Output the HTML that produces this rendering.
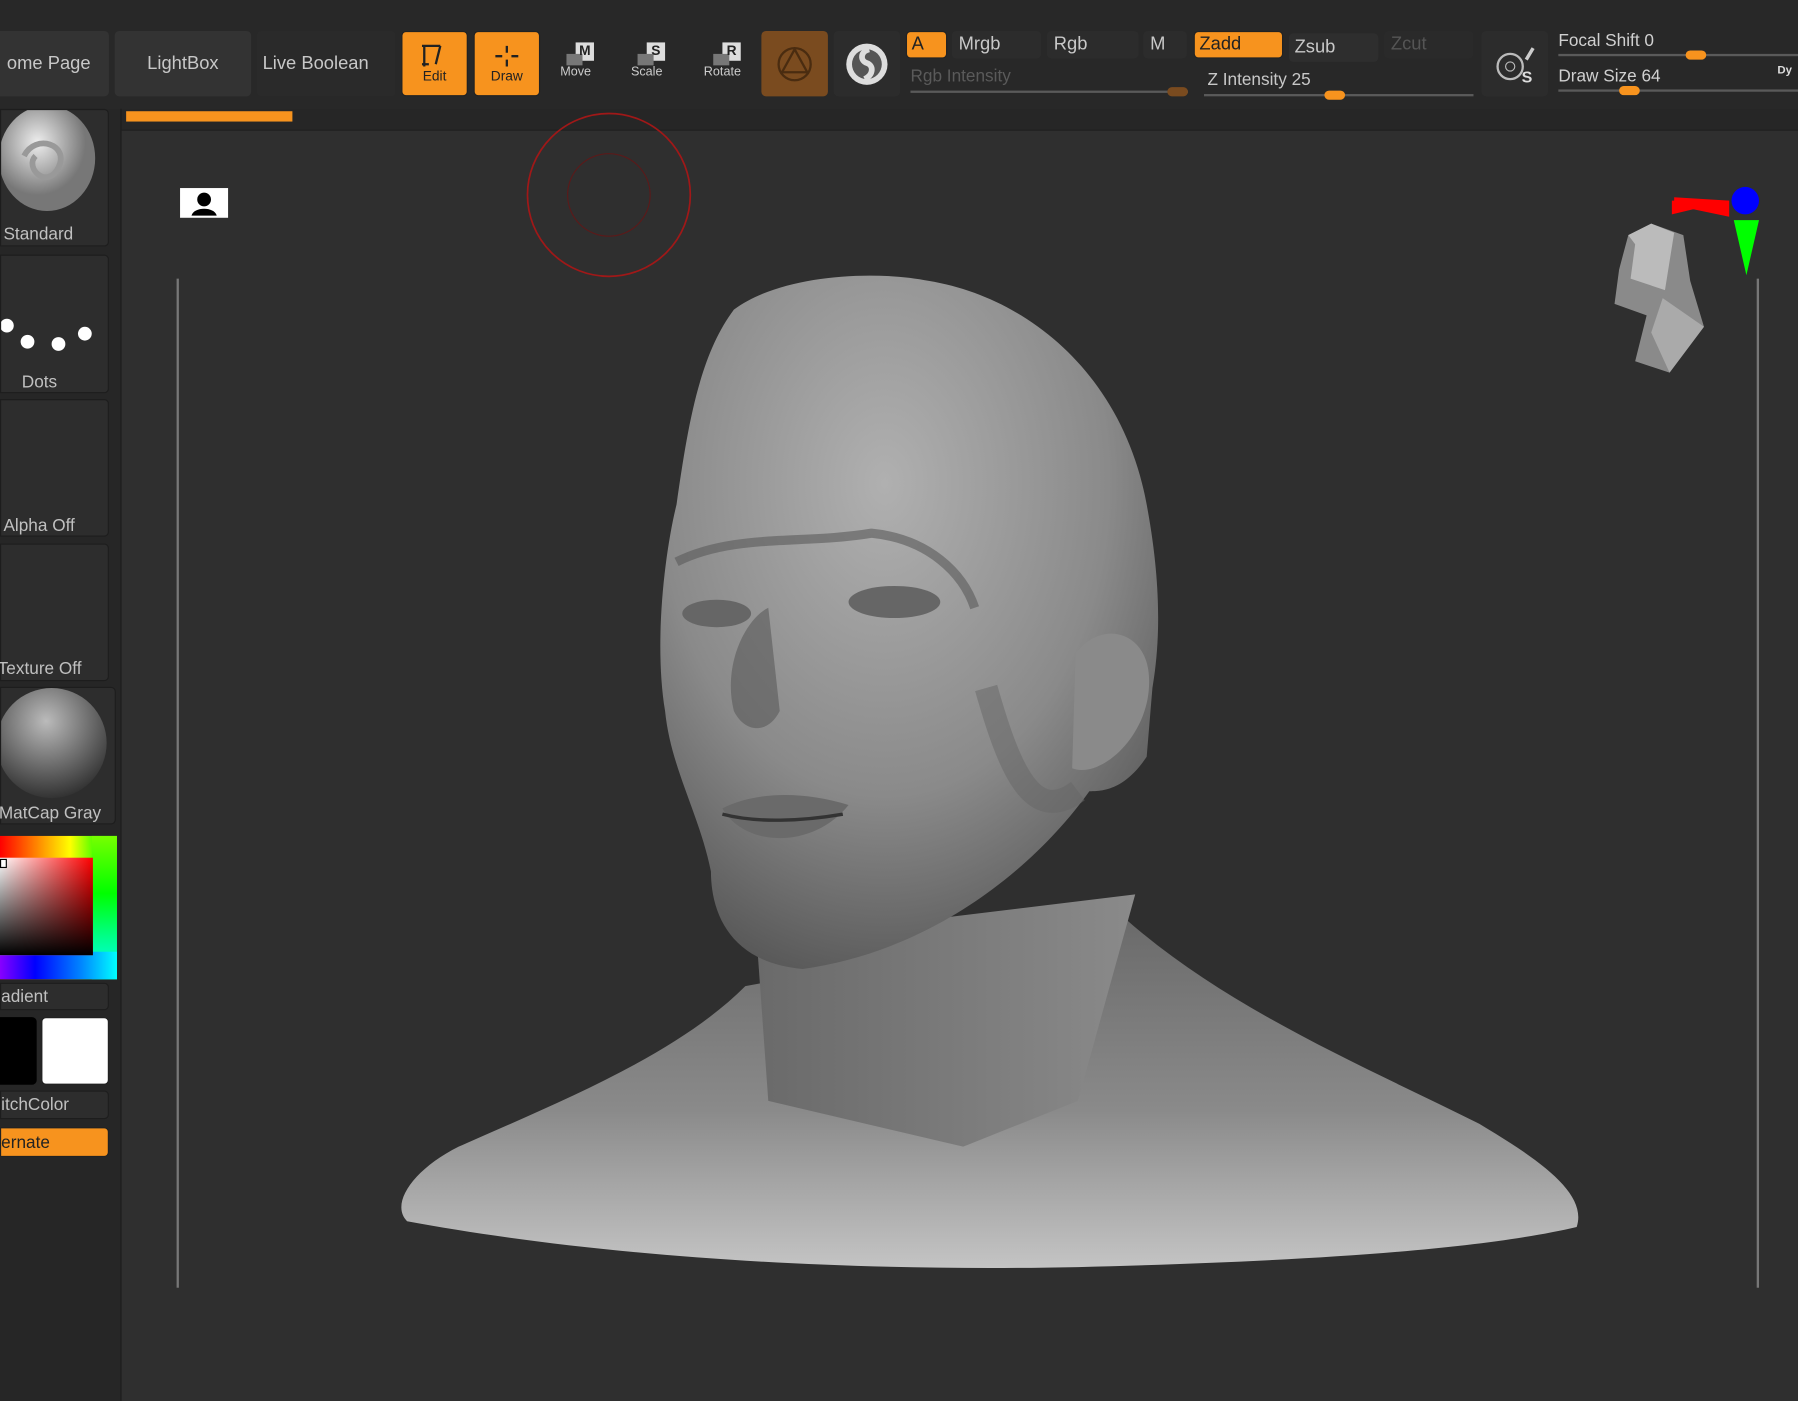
<!DOCTYPE html>
<html><head><meta charset="utf-8"><style>
*{margin:0;padding:0;box-sizing:border-box}
body{width:1798px;height:1401px;overflow:hidden;background:#262626;font-family:"Liberation Sans",sans-serif}
#w{position:absolute;left:0;top:0;width:1568px;height:1222px;transform:scale(1.14668);transform-origin:0 0;background:#262626}
.a{position:absolute}
.b{position:absolute;background:#303030;border-radius:4px;color:#c8c8c8;font-size:16px;display:flex;align-items:center;justify-content:center}
.o{background:#f7931e;color:#222;border:1px solid #222}
.s{position:absolute;height:2px;background:#5a5a5a}
.t{position:absolute;width:18px;height:8px;border-radius:4px;background:#f7931e}
.tile{position:absolute;left:0;width:95px;background:#2d2d2d;border-radius:0 4px 4px 0;border:1px solid #1d1d1d}
.lab{position:absolute;left:2px;color:#c0c0c0;font-size:15px;white-space:nowrap}
.ib{position:absolute;color:#ccc;font-size:11px;text-align:center}
</style></head><body><div id="w">
<div class="a" style="left:0;top:0;width:1568px;height:95px;background:#282828"></div>
<div class="b" style="left:-10px;top:27px;width:105px;height:57px;background:#333">ome Page</div>
<div class="b" style="left:100px;top:27px;width:119px;height:57px;background:#333">LightBox</div>
<div class="b" style="left:224px;top:27px;width:121px;height:57px;background:#2a2a2a;justify-content:flex-start;padding-left:5px">Live Boolean</div>
<div class="b o" style="left:350px;top:27px;width:58px;height:57px;font-size:12px;align-items:flex-end;padding-bottom:10px">Edit</div>
<svg class="a" style="left:364px;top:36px" width="30" height="26"><path d="M4 4h16M6 4v18M4 20h6M20 4l-4 16" stroke="#222" stroke-width="2" fill="none"/></svg>
<div class="b o" style="left:413px;top:27px;width:58px;height:57px;font-size:12px;align-items:flex-end;padding-bottom:10px">Draw</div>
<svg class="a" style="left:428px;top:38px" width="28" height="24"><path d="M14 2v6M14 14v6M4 11h6M18 11h6" stroke="#222" stroke-width="2"/></svg>
<div class="ib" style="left:480px;top:37px;width:44px"><div style="margin-left:22px;width:16px;height:16px;background:#ddd;color:#222;font-weight:bold;font-size:12px">M</div><div style="margin:-6px 0 0 14px;width:14px;height:10px;background:#777"></div>Move</div>
<div class="ib" style="left:542px;top:37px;width:44px"><div style="margin-left:22px;width:16px;height:16px;background:#ddd;color:#222;font-weight:bold;font-size:12px">S</div><div style="margin:-6px 0 0 14px;width:14px;height:10px;background:#777"></div>Scale</div>
<div class="ib" style="left:608px;top:37px;width:44px"><div style="margin-left:22px;width:16px;height:16px;background:#ddd;color:#222;font-weight:bold;font-size:12px">R</div><div style="margin:-6px 0 0 14px;width:14px;height:10px;background:#777"></div>Rotate</div>
<div class="b" style="left:664px;top:27px;width:58px;height:57px;background:#7a4b1f"><svg width="34" height="34"><circle cx="17" cy="17" r="14" stroke="#4a2c10" stroke-width="2" fill="none"/><path d="M17 4L6 24h22z" stroke="#4a2c10" stroke-width="2" fill="none"/></svg></div>
<div class="b" style="left:727px;top:27px;width:58px;height:57px;background:#2c2c2c"><svg width="40" height="40"><circle cx="20" cy="20" r="18" fill="#ddd"/><circle cx="20" cy="20" r="13" fill="#555"/><path d="M22 7c-8 2-8 10-2 12s6 10-2 14" stroke="#ddd" stroke-width="5" fill="none"/></svg></div>
<div class="b o" style="left:790px;top:27px;width:36px;height:24px;justify-content:flex-start;padding-left:4px">A</div>
<div class="b" style="left:830px;top:27px;width:78px;height:24px;justify-content:flex-start;padding-left:6px;background:#2c2c2c">Mrgb</div>
<div class="b" style="left:913px;top:27px;width:80px;height:24px;justify-content:flex-start;padding-left:6px;background:#2c2c2c">Rgb</div>
<div class="b" style="left:997px;top:27px;width:38px;height:24px;justify-content:flex-start;padding-left:6px;background:#2c2c2c">M</div>
<div class="b o" style="left:1041px;top:27px;width:78px;height:24px;justify-content:flex-start;padding-left:4px">Zadd</div>
<div class="b" style="left:1124px;top:29px;width:78px;height:25px;justify-content:flex-start;padding-left:5px;background:#2e2e2e">Zsub</div>
<div class="b" style="left:1207px;top:27px;width:78px;height:24px;justify-content:flex-start;padding-left:6px;background:#2a2a2a;color:#555">Zcut</div>
<div class="a" style="left:794px;top:58px;color:#5a5a5a;font-size:15px">Rgb Intensity</div>
<div class="s" style="left:794px;top:79px;width:242px"></div><div class="t" style="left:1018px;top:76px;background:#7a4b1f"></div>
<div class="a" style="left:1053px;top:61px;color:#c8c8c8;font-size:15px">Z Intensity 25</div>
<div class="s" style="left:1050px;top:82px;width:235px"></div><div class="t" style="left:1155px;top:79px"></div>
<div class="b" style="left:1292px;top:27px;width:58px;height:57px;background:#2c2c2c;color:#ddd;font-weight:bold"><svg width="40" height="36"><circle cx="16" cy="20" r="11" stroke="#bbb" stroke-width="2" fill="none"/><circle cx="16" cy="20" r="4" stroke="#bbb" fill="none"/><path d="M30 14l6-10" stroke="#ccc" stroke-width="3"/><text x="26" y="34" fill="#ddd" font-size="14" font-weight="bold" font-family="Liberation Sans">S</text></svg></div>
<div class="a" style="left:1359px;top:27px;color:#d0d0d0;font-size:15px">Focal Shift 0</div>
<div class="s" style="left:1359px;top:47px;width:209px"></div><div class="t" style="left:1470px;top:44px"></div>
<div class="a" style="left:1359px;top:58px;color:#d0d0d0;font-size:15px">Draw Size 64</div>
<div class="s" style="left:1359px;top:78px;width:209px"></div><div class="t" style="left:1412px;top:75px"></div>
<div class="a" style="left:1550px;top:56px;color:#ddd;font-size:10px;font-weight:bold">Dy</div>
<div class="a" style="left:110px;top:97px;width:145px;height:9px;background:#f7931e"></div>
<div class="a" style="left:105px;top:95px;width:1px;height:1127px;background:#1c1c1c"></div>
<div class="a" style="left:106px;top:113px;width:1462px;height:1109px;background:#2f2f2f;border-top:1px solid #1f1f1f"></div>
<div class="tile" style="top:95px;height:120px"><svg class="a" style="left:0;top:0" width="85" height="95"><defs><radialGradient id="g1" cx=".4" cy=".35"><stop offset="0" stop-color="#eee"/><stop offset="1" stop-color="#777"/></radialGradient></defs><ellipse cx="40" cy="42" rx="42" ry="46" fill="url(#g1)"/><path d="M20 40c10-20 40-10 30 10s-30 0-20-10" stroke="#999" stroke-width="5" fill="none"/></svg><div class="lab" style="top:100px">Standard</div></div>
<div class="tile" style="top:222px;height:121px"><svg class="a" style="left:0;top:0" width="90" height="90"><g fill="#fff"><circle cx="5" cy="61" r="6"/><circle cx="23" cy="75" r="6"/><circle cx="50" cy="77" r="6"/><circle cx="73" cy="68" r="6"/></g></svg><div class="lab" style="left:18px;top:102px">Dots</div></div>
<div class="tile" style="top:348px;height:120px"><div class="lab" style="top:101px">Alpha Off</div></div>
<div class="tile" style="top:474px;height:120px"><div class="lab" style="top:100px;left:-3px">Texture Off</div></div>
<div class="tile" style="top:599px;height:120px;width:101px"><svg class="a" style="left:0;top:0" width="95" height="100"><defs><radialGradient id="g2" cx=".45" cy=".3" r=".7"><stop offset="0" stop-color="#bbb"/><stop offset="1" stop-color="#333"/></radialGradient></defs><circle cx="44" cy="48" r="48" fill="url(#g2)"/></svg><div class="lab" style="top:101px;left:-2px">MatCap Gray</div></div>
<div class="a" style="left:0;top:729px;width:102px;height:125px;background:linear-gradient(90deg,#f00,#ff0 60%,#0f0 90%)"></div>
<div class="a" style="left:80px;top:729px;width:22px;height:125px;background:linear-gradient(#7f0,#0f0 40%,#0f8 70%,#0ff)"></div>
<div class="a" style="left:0;top:830px;width:102px;height:24px;background:linear-gradient(90deg,#80f,#00f 30%,#08f 70%,#0ff)"></div>
<div class="a" style="left:0;top:748px;width:81px;height:85px;background:linear-gradient(transparent,#000),linear-gradient(90deg,#fff,#f00)"></div>
<div class="a" style="left:0;top:749px;width:6px;height:8px;border:1px solid #000;background:#fff"></div>
<div class="tile" style="top:857px;height:24px;width:95px"><div class="lab" style="top:3px;left:0">adient</div></div>
<div class="a" style="left:0;top:887px;width:32px;height:59px;background:#000;border-radius:0 4px 4px 0"></div>
<div class="a" style="left:36px;top:887px;width:59px;height:59px;background:#fff;border-radius:4px;border:1px solid #222"></div>
<div class="tile" style="top:951px;height:25px"><div class="lab" style="top:3px;left:0">itchColor</div></div>
<div class="a o" style="left:0;top:983px;width:95px;height:26px;border-radius:0 4px 4px 0;color:#222;font-size:15px;padding:4px 0 0 0">ernate</div>
<div class="a" style="left:154px;top:243px;width:2px;height:880px;background:#777"></div>
<div class="a" style="left:1532px;top:243px;width:2px;height:880px;background:#777"></div>
<svg class="a" style="left:157px;top:164px" width="42" height="26"><rect width="42" height="26" fill="#fff"/><circle cx="21" cy="10" r="6" fill="#000"/><path d="M10 24c2-8 20-8 22 0z" fill="#000"/></svg>
<svg class="a" style="left:455px;top:95px" width="160" height="150"><circle cx="76" cy="75" r="71" stroke="#a01818" stroke-width="1.5" fill="none"/><circle cx="76" cy="75" r="36" stroke="#5a1a1a" fill="none"/></svg>
<svg class="a" style="left:1400px;top:160px" width="140" height="170"><path d="M58 15l50 0-50 12z" fill="#f00"/><path d="M60 12l48 3 0 14-48-10z" fill="#f00"/><circle cx="122" cy="15" r="12" fill="#00f"/><path d="M112 32h22l-11 48z" fill="#0f0"/><path d="M20 45l20-10 28 10 6 40 12 40-30 40-30-10 10-40-28-10 4-30z" fill="#8a8a8a"/><path d="M20 45l20-10 20 8-8 50-30-10 4-30z" fill="#bbb"/><path d="M40 130l10-30 36 25-30 40z" fill="#aaa"/></svg>
<svg class="a" style="left:340px;top:240px" width="1050" height="885">
<defs>
<radialGradient id="h" cx=".45" cy=".3" r=".75"><stop offset="0" stop-color="#b0b0b0"/><stop offset=".6" stop-color="#8a8a8a"/><stop offset="1" stop-color="#555"/></radialGradient>
<linearGradient id="sh" x1="0" y1="0" x2="0" y2="1"><stop offset="0" stop-color="#6a6a6a"/><stop offset=".55" stop-color="#8a8a8a"/><stop offset="1" stop-color="#c4c4c4"/></linearGradient>
<linearGradient id="nk" x1="0" y1="0" x2="1" y2="0"><stop offset="0" stop-color="#6a6a6a"/><stop offset="1" stop-color="#8a8a8a"/></linearGradient>
</defs>
<path d="M310 620C250 680 150 720 60 760C20 780 0 810 15 825C150 850 350 870 600 865C800 860 950 850 1035 830C1045 800 1000 770 950 740C850 690 730 640 640 560Z" fill="url(#sh)"/>
<path d="M320 580L650 540 600 720 500 760 330 720Z" fill="url(#nk)"/>
<path d="M300 30C340 0 420 -5 470 5C560 20 640 90 660 200C675 280 670 330 665 360L660 420C640 450 620 450 610 450C560 520 470 590 360 605C300 600 280 560 280 520C270 470 245 430 240 380C230 320 240 240 250 200C260 130 270 70 300 30Z" fill="url(#h)"/>
<path d="M598 330C620 300 660 310 662 350C665 400 620 440 595 430Z" fill="#8a8a8a"/>
<path d="M250 250C300 225 360 235 420 225C470 230 500 260 510 290" stroke="#5a5a5a" stroke-width="8" fill="none" opacity=".6"/>
<ellipse cx="285" cy="295" rx="30" ry="12" fill="#666"/><ellipse cx="440" cy="285" rx="40" ry="14" fill="#666"/>
<path d="M300 380C290 340 310 300 330 290L340 380C330 400 310 400 300 380Z" fill="#5a5a5a" opacity=".6"/>
<path d="M290 465C320 450 360 450 400 462C370 500 310 500 290 465Z" fill="#6a6a6a"/>
<path d="M290 470C320 478 360 476 395 470" stroke="#333" stroke-width="3" fill="none"/>
<path d="M520 360C540 430 560 480 600 450" stroke="#666" stroke-width="20" fill="none" opacity=".5"/>
</svg>
</div></body></html>
